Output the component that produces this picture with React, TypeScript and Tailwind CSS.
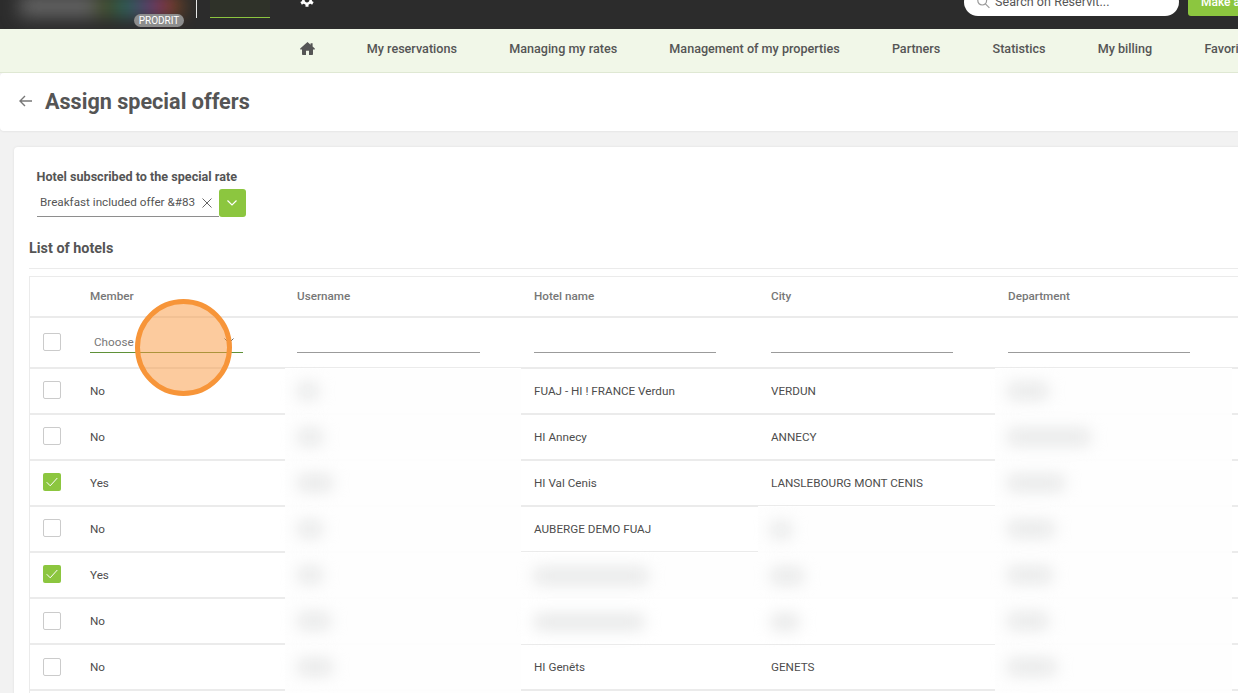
import React from "react";
import clsx from "clsx";

type Row = {
  checked: boolean;
  member: string;
  username: string;
  hotel?: string;
  hotelBlur?: string;
  hotelLine: string;
  city?: string;
  cityBlur?: string;
  cityLine: string;
  department: string;
  box: string;
};

const line = "border-b-2 border-[#ebebeb]";
const thinTop = "mb-px border-b border-[#ebebeb]";
const thinBottom = "border-b border-[#ebebeb]";
const noLine = "border-b-2 border-[#fdfdfd] bg-[#fefefe]";

const grid =
  "grid grid-cols-[48px_207px_236px_237px_237px_237px_80px] border-l border-[#ebebeb]";

const rows: Row[] = [
  { checked: false, member: "No", username: "w-5", hotel: "FUAJ - HI ! FRANCE Verdun", hotelLine: line, city: "VERDUN", cityLine: line, department: "w-10", box: "-mt-0.5" },
  { checked: false, member: "No", username: "w-6", hotel: "HI Annecy", hotelLine: line, city: "ANNECY", cityLine: line, department: "w-[82px]", box: "-mt-0.5" },
  { checked: true, member: "Yes", username: "w-[34px]", hotel: "HI Val Cenis", hotelLine: line, city: "LANSLEBOURG MONT CENIS", cityLine: thinTop, department: "w-[56px]", box: "-mt-0.5" },
  { checked: false, member: "No", username: "w-6", hotel: "AUBERGE DEMO FUAJ", hotelLine: thinTop, cityBlur: "w-5", cityLine: noLine, department: "w-[46px]", box: "-mt-0.5" },
  { checked: true, member: "Yes", username: "w-6", hotelBlur: "w-[114px]", hotelLine: noLine, cityBlur: "w-8", cityLine: noLine, department: "w-11", box: "-mt-0.5" },
  { checked: false, member: "No", username: "w-8", hotelBlur: "w-[110px]", hotelLine: thinBottom, cityBlur: "w-7", cityLine: thinBottom, department: "w-10", box: "" },
  { checked: false, member: "No", username: "w-[34px]", hotel: "HI Genêts", hotelLine: line, city: "GENETS", cityLine: line, department: "w-12", box: "" },
  { checked: false, member: "", username: "w-0", hotelLine: line, cityLine: line, department: "w-0", box: "" },
];

const navItems = [
  "My reservations",
  "Managing my rates",
  "Management of my properties",
  "Partners",
  "Statistics",
  "My billing",
  "Favorites",
];

const Checkbox = ({ checked, className }: { checked?: boolean; className?: string }) => (
  <span
    className={clsx(
      "flex size-[18px] shrink-0 items-center justify-center rounded-[2px]",
      checked ? "bg-[#8cc63f]" : "border border-[#cbcbcb] bg-white",
      className
    )}
  >
    {checked && (
      <svg viewBox="0 0 12 10" className="h-[10px] w-3" fill="none" stroke="white" strokeWidth="1">
        <path d="M0.7 5.2 4.2 8.8 11.3 1" />
      </svg>
    )}
  </span>
);

const Smudge = ({ width }: { width: string }) => (
  <span className={clsx("h-4 rounded bg-[#e6e7e7] blur-[8px]", width)} />
);

const Header = () => (
  <header className="flex h-[29px] items-start overflow-hidden bg-[#2c2c2c]">
    {/* Logo */}
    <div className="relative h-[29px] w-[196px] shrink-0 overflow-hidden">
      <div className="-mt-1 ml-5 flex h-5 w-[162px] blur-[9px]">
        <span className="w-[76px] bg-[#6a6a6a]" />
        <span className="w-5 bg-[#46542c]" />
        <span className="w-5 bg-[#2c6a62]" />
        <span className="w-5 bg-[#5c4a7c]" />
        <span className="w-3 bg-[#a0305a]" />
        <span className="flex-1 bg-[#7d4a20]" />
      </div>
      <span className="absolute left-[134px] top-[14px] flex h-[13px] w-[50px] items-center justify-center rounded-full bg-[#8d8d8d] text-[10px] leading-none text-white">
        PRODRIT
      </span>
    </div>
    <div className="h-[18px] w-px shrink-0 bg-[#e8e8e8]" />
    <div className="ml-[13px] flex h-[18px] w-[60px] shrink-0 flex-col justify-end bg-[#2f3229]">
      <span className="h-px bg-[#8cc63f]" />
    </div>
    <svg viewBox="-7 -7 14 14" className="-mt-[7px] ml-[30px] size-[14px] shrink-0" fill="none" stroke="white">
      <circle r="3.7" strokeWidth="2.6" />
      <path d="M0-4V-6.8M0 4V6.8M3.5 2 5.9 3.4M-3.5-2-5.9-3.4M3.5-2 5.9-3.4M-3.5 2-5.9 3.4" strokeWidth="3" />
    </svg>
    <div className="-mt-3 ml-[650px] flex h-7 w-[215px] shrink-0 items-center rounded-[14px] bg-white pl-[13px]">
      <svg viewBox="0 0 14 14" className="-mt-px size-[14px]" fill="none" stroke="#999" strokeWidth="1.2">
        <circle cx="5.2" cy="5.6" r="4.4" />
        <path d="m8.4 8.8 4 4" />
      </svg>
      <span className="ml-1 text-[12.5px] tracking-[0.05px] text-[#555]">Search on Reservit...</span>
    </div>
    <div className="-mt-3 ml-[9px] flex h-7 w-40 shrink-0 items-center rounded-[3px] bg-[#8cc63f] pl-[13px] text-xs font-medium text-white">
      Make a reservation
    </div>
  </header>
);

const Nav = () => (
  <nav className="flex h-11 items-center gap-[52.25px] overflow-hidden whitespace-nowrap border-b border-[#dfe8d3] bg-[#f1f7e8] pb-[3px] pl-[299.5px] text-[12.6px] font-medium text-[#555]">
    <svg viewBox="0 0 15 13" className="-mt-0.5 h-[13px] w-[15px] shrink-0" fill="#555">
      <path d="M7.5 0 10.6 2.7V1.2H12.6V4.5L14.8 6.5V7.4H13V12.2Q13 13 12.2 13H9V8.7H6V13H2.8Q2 13 2 12.2V7.4H.2V6.5Z" />
    </svg>
    {navItems.map((item) => (
      <span key={item}>{item}</span>
    ))}
  </nav>
);

const HotelTable = () => (
  <div className="relative border-t border-[#ebebeb] text-[11.7px] text-[#4d4d4d]">
    <div className={clsx(grid, "h-[41px] font-medium text-[#777]")}>
      <div className={line} />
      {["Member", "Username", "Hotel name", "City", "Department", ""].map((name, i) => (
        <div key={i} className={clsx("flex items-center", i > 1 ? "pl-[13px]" : "pl-3", line)}>
          {name}
        </div>
      ))}
    </div>
    {/* Filters */}
    <div className={clsx(grid, "h-[51px]")}>
      <div className={clsx("flex items-center pl-[13px]", line)}>
        <Checkbox className="-mt-0.5" />
      </div>
      <div className={clsx("pl-3 pt-3", line)}>
        <div className="flex h-[23px] w-[153px] items-center justify-between border-b border-[#5f9138] pl-1 pr-[9px] pt-[3px] text-[#777]">
          Choose
          <svg viewBox="0 0 10 6" className="-mt-[3px] h-1.5 w-2.5" fill="none" stroke="#666">
            <path d="m.5.5 4.5 4.5L9.5.5" />
          </svg>
        </div>
      </div>
      {[thinTop, line, line, thinTop, line].map((border, i) => (
        <div key={i} className={clsx("pt-3", i > 0 ? "pl-[13px]" : "pl-3", border)}>
          {i < 4 && (
            <div className={clsx("h-[23px] border-b border-[#9b9b9b]", i > 0 ? "w-[182px]" : "w-[183px]")} />
          )}
        </div>
      ))}
    </div>
    {rows.map((row, i) => (
      <div key={i} className={clsx(grid, "h-[46px]")}>
        <div className={clsx("flex items-center pl-[13px]", line)}>
          <Checkbox checked={row.checked} className={row.box} />
        </div>
        <div className={clsx("flex items-center pl-3 pt-px", line)}>{row.member}</div>
        <div className={clsx("flex items-center pl-[13px]", noLine)}>
          <Smudge width={row.username} />
        </div>
        <div className={clsx("flex items-center pl-[13px] pt-px", row.hotelLine)}>
          {row.hotelBlur ? <Smudge width={row.hotelBlur} /> : row.hotel}
        </div>
        <div className={clsx("flex items-center pl-[13px] pt-px", row.cityLine)}>
          {row.cityBlur ? <Smudge width={row.cityBlur} /> : row.city}
        </div>
        <div className={clsx("flex items-center pl-[13px]", noLine)}>
          <Smudge width={row.department} />
        </div>
        <div className={line} />
      </div>
    ))}
    {/* Click marker */}
    <div className="absolute left-[106px] top-[22px] size-[97px] rounded-full border-[5px] border-[#f79539] bg-[#f9973e]/50" />
  </div>
);

export default function App() {
  return (
    <div className="h-[693px] w-full overflow-hidden bg-[#f2f2f2] font-['Roboto',sans-serif]">
      <Header />
      <Nav />
      <div className="flex h-[58px] items-center rounded-l bg-white pl-[19px] shadow-[0_1px_2px_rgba(0,0,0,0.05)]">
        <svg viewBox="0 0 13 12" className="-mt-0.5 h-3 w-[13px]" fill="none" stroke="#777" strokeWidth="1.4">
          <path d="M13 6H1.2M6 1 1 6l5 5" />
        </svg>
        <h1 className="ml-[13px] text-[21.6px] font-bold leading-none text-[#555]">
          Assign special offers
        </h1>
      </div>
      <main className="ml-[14px] mt-4 w-[1300px] rounded-tl bg-white pl-[15px] pt-[21px] shadow-[0_0_3px_rgba(0,0,0,0.08)]">
        <p className="ml-[7.5px] text-[12.6px] font-bold leading-[18px] text-[#555]">
          Hotel subscribed to the special rate
        </p>
        <div className="ml-2 mt-[3px] flex h-7">
          <div className="flex w-[182px] items-center border-b border-[#8e8e8e] pl-[3px] text-[11.7px] text-[#555]">
            Breakfast included offer &amp;#83
            <svg viewBox="0 0 10 10" className="ml-[7px] size-2.5" fill="none" stroke="#666">
              <path d="m.5.5 9 9m0-9-9 9" />
            </svg>
          </div>
          <button className="flex w-[27px] items-center justify-center rounded-[3px] bg-[#8cc63f] pr-px">
            <svg viewBox="0 0 10 6" className="h-1.5 w-2.5" fill="none" stroke="white" strokeWidth="1.2">
              <path d="m.5.5 4.5 4.5L9.5.5" />
            </svg>
          </button>
        </div>
        <h2 className="mt-[22px] text-[14.4px] font-bold leading-5 text-[#555]">List of hotels</h2>
        <div className="mb-[7px] mt-[9px] h-px bg-[#ebebeb]" />
        <HotelTable />
      </main>
    </div>
  );
}
